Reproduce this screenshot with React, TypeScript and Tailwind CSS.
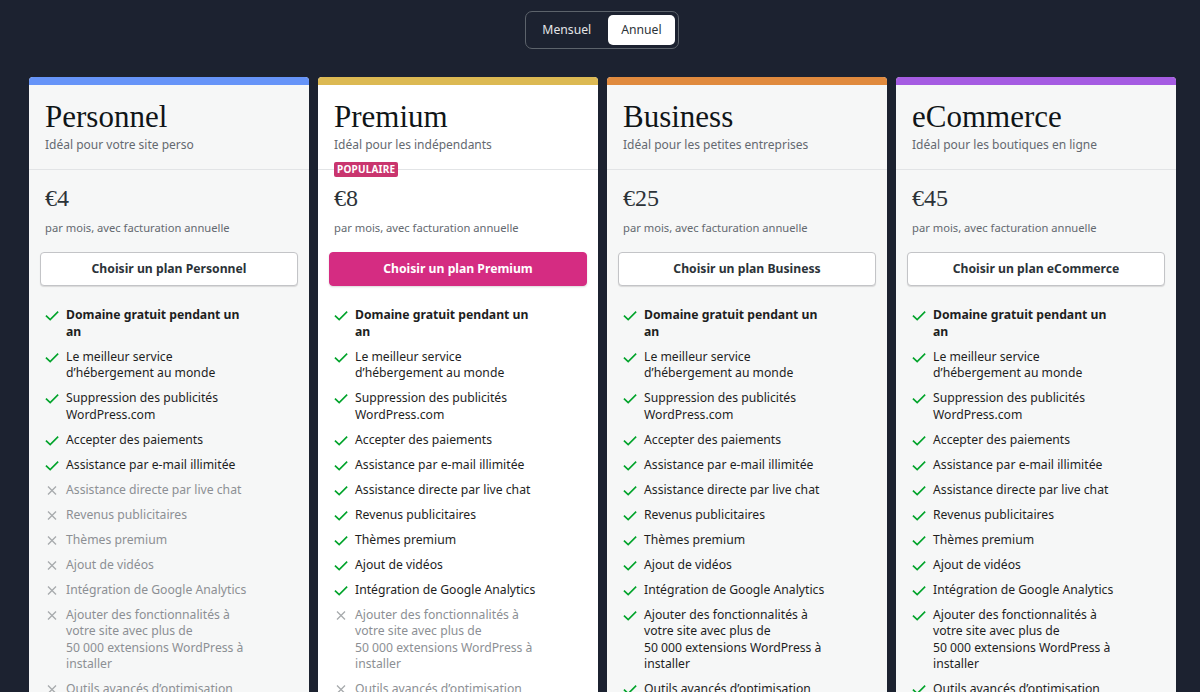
import React from "react";

type Plan = {
  name: string;
  tagline: string;
  price: string;
  bar: string;
  bg: string;
  primary?: boolean;
  popular?: boolean;
  enabled: number;
};

const FEATURES = [
  "Domaine gratuit pendant un an",
  "Le meilleur service d’hébergement au monde",
  "Suppression des publicités WordPress.com",
  "Accepter des paiements",
  "Assistance par e-mail illimitée",
  "Assistance directe par live chat",
  "Revenus publicitaires",
  "Thèmes premium",
  "Ajout de vidéos",
  "Intégration de Google Analytics",
  "Ajouter des fonctionnalités à votre site avec plus de 50\u00a0000\u00a0extensions WordPress à installer",
  "Outils avancés d’optimisation du référencement",
  "Sauvegardes automatiques du site",
  "Accès SFTP et base de données",
];

const PLANS: Plan[] = [
  { name: "Personnel", tagline: "Idéal pour votre site perso", price: "€4", bar: "bg-[#6694f8]", bg: "bg-[#f6f7f7]", enabled: 5 },
  { name: "Premium", tagline: "Idéal pour les indépendants", price: "€8", bar: "bg-[#dcb953]", bg: "bg-white", primary: true, popular: true, enabled: 10 },
  { name: "Business", tagline: "Idéal pour les petites entreprises", price: "€25", bar: "bg-[#e08a3e]", bg: "bg-[#f6f7f7]", enabled: 14 },
  { name: "eCommerce", tagline: "Idéal pour les boutiques en ligne", price: "€45", bar: "bg-[#a55ce2]", bg: "bg-[#f6f7f7]", enabled: 14 },
];

function Check() {
  return (
    <svg viewBox="0 0 14 16.5" className="w-[14px] h-[16.5px] shrink-0" fill="none">
      <path d="M1.5 9.2 L5.2 12.6 L12.6 5.2" stroke="#00a32a" strokeWidth="1.6" strokeLinecap="square" />
    </svg>
  );
}

function Cross() {
  return (
    <svg viewBox="0 0 14 16.5" className="w-[14px] h-[16.5px] shrink-0" fill="none">
      <path d="M3 4.5 L11 12.5 M11 4.5 L3 12.5" stroke="#a7aaad" strokeWidth="1.3" />
    </svg>
  );
}

function Card({ plan }: { plan: Plan }) {
  return (
    <div className={`w-[280px] shrink-0 rounded-[4px] overflow-hidden ${plan.bg}`}>
      <div className={`h-[8px] ${plan.bar}`} />
      <div className="relative px-4 pt-[14px] pb-[15px] border-b border-[#e2e4e6]">
        <h2 className="text-[31px] leading-[36px] text-[#101517]" style={{ fontFamily: '"Liberation Serif", serif' }}>
          {plan.name}
        </h2>
        <p className="text-[12px] leading-[19px] text-[#646970]">{plan.tagline}</p>
        {plan.popular && (
          <span className="absolute left-4 bottom-[-8px] bg-[#c9356e] text-white text-[10px] font-bold leading-[15px] px-[3px] rounded-[2px] tracking-[0.2px]">
            POPULAIRE
          </span>
        )}
      </div>
      <div className="px-[11px] pt-[12px] pb-6">
        <div className="pl-[5px] text-[24px] leading-[32px] text-[#2c3338]" style={{ fontFamily: '"Liberation Serif", serif' }}>
          {plan.price}
        </div>
        <div className="pl-[5px] mt-[5px] text-[11.2px] leading-[18px] text-[#646970]">par mois, avec facturation annuelle</div>
        <button
          className={
            plan.primary
              ? "mt-[15px] w-full h-[34px] rounded-[4px] bg-[#d52c82] text-white text-[12.2px] font-bold border border-[#d52c82] shadow-[0_1px_2px_rgba(0,0,0,0.15)]"
              : "mt-[15px] w-full h-[34px] rounded-[4px] bg-white text-[#2c3338] text-[12.2px] font-bold border border-[#c3c4c7] shadow-[0_1px_1px_rgba(0,0,0,0.12)]"
          }
        >
          Choisir un plan {plan.name}
        </button>
        <ul className="mt-[21px] pl-[5px] flex flex-col gap-[8.5px]">
          {FEATURES.map((f, i) => {
            const on = i < plan.enabled;
            return (
              <li key={i} className="flex items-start gap-[7px]">
                {on ? <Check /> : <Cross />}
                <span
                  className={`max-w-[185px] text-[12.2px] leading-[16.5px] ${on ? "text-[#1e1e1e]" : "text-[#8c8f94]"} ${i === 0 ? "font-bold" : ""}`}
                >
                  {f}
                </span>
              </li>
            );
          })}
        </ul>
      </div>
    </div>
  );
}

export default function App() {
  return (
    <div className="min-h-[692px] bg-[#1c2230] text-[#1e1e1e]" style={{ fontFamily: '"Noto Sans", sans-serif' }}>
      <div className="flex justify-center pt-[11px] pl-[4px]">
        <div className="flex items-center gap-[4px] p-[3px] border border-[#5c636b] rounded-[7px]">
          <button className="h-[30px] px-[13px] text-[12.2px] text-[#e4e5e7] rounded-[5px]">Mensuel</button>
          <button className="h-[30px] px-[13px] text-[12.2px] text-[#2c3338] bg-white rounded-[5px]">Annuel</button>
        </div>
      </div>
      <div className="flex gap-[9px] pl-[29px] pt-[28px]">
        {PLANS.map((p) => (
          <Card key={p.name} plan={p} />
        ))}
      </div>
    </div>
  );
}
